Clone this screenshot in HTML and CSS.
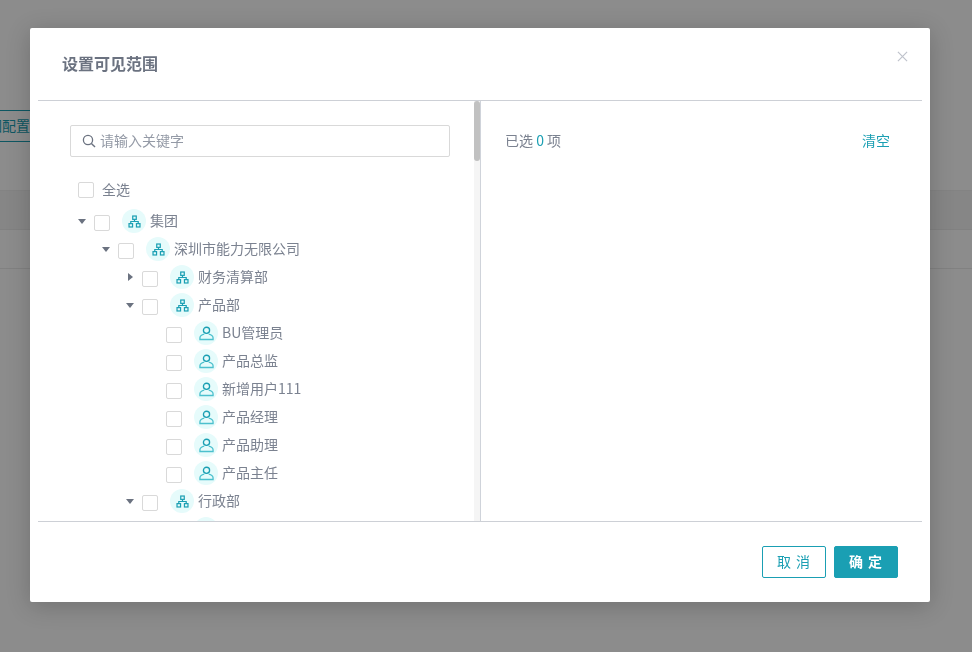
FILE: index.html
```html
<!DOCTYPE html>
<html lang="zh">
<head>
<meta charset="utf-8">
<title>设置可见范围</title>
<link rel="stylesheet" href="styles.css">
</head>
<body>
<svg class="defs" width="0" height="0" aria-hidden="true">
  <symbol id="org" viewBox="0 0 14 14">
    <g fill="none" stroke="#1a9fb3" stroke-width="1.3">
      <rect x="5.1" y="1.1" width="3.8" height="3.6"/>
      <rect x="1.1" y="9.3" width="3.8" height="3.6"/>
      <rect x="9.1" y="9.3" width="3.8" height="3.6"/>
      <path d="M7 4.8V7M3 9.2V7h8v2.2"/>
    </g>
  </symbol>
  <symbol id="user" viewBox="0 0 16 16">
    <g fill="none" stroke-width="1.4">
      <circle cx="8" cy="4.6" r="3.3" stroke="#1a9fb3"/>
      <path d="M5.6 8.6C3 9.2 1 10.4 1 12.6V14.4h14v-1.8c0-2.2-2-3.4-4.6-4" stroke="#4cc0cd"/>
    </g>
  </symbol>
</svg>
<div class="page">
  <div class="page-top"><span class="page-btn">范围配置</span></div>
  <div class="page-head"></div>
  <div class="page-row"></div>
</div>
<div class="mask"></div>
<div class="modal">
  <header class="modal-head">
    <h2 class="modal-title">设置可见范围</h2>
    <svg class="close" viewBox="0 0 12 12" width="11" height="11"><path d="M1 1l10 10M11 1L1 11" stroke="#bfc3cc" stroke-width="1.3" fill="none"/></svg>
  </header>
  <div class="modal-body">
    <section class="left">
      <div class="search">
        <svg class="search-icon" viewBox="0 0 14 14" width="14" height="14"><circle cx="6" cy="6" r="4.6" fill="none" stroke="#6b7280" stroke-width="1.3"/><path d="M9.4 9.4L13 13" stroke="#6b7280" stroke-width="1.4"/></svg>
        <span class="placeholder">请输入关键字</span>
      </div>
      <div class="all"><i class="check"></i><span class="label">全选</span></div>
      <ul class="tree">
        <li class="node l0"><i class="arrow down"></i><i class="check"></i><span class="badge"><svg class="ico-org"><use href="#org"/></svg></span><span class="label">集团</span></li>
        <li class="node l1"><i class="arrow down"></i><i class="check"></i><span class="badge"><svg class="ico-org"><use href="#org"/></svg></span><span class="label">深圳市能力无限公司</span></li>
        <li class="node l2"><i class="arrow side"></i><i class="check"></i><span class="badge"><svg class="ico-org"><use href="#org"/></svg></span><span class="label">财务清算部</span></li>
        <li class="node l2"><i class="arrow down"></i><i class="check"></i><span class="badge"><svg class="ico-org"><use href="#org"/></svg></span><span class="label">产品部</span></li>
        <li class="node l3"><i class="arrow"></i><i class="check"></i><span class="badge"><svg class="ico-user"><use href="#user"/></svg></span><span class="label">BU管理员</span></li>
        <li class="node l3"><i class="arrow"></i><i class="check"></i><span class="badge"><svg class="ico-user"><use href="#user"/></svg></span><span class="label">产品总监</span></li>
        <li class="node l3"><i class="arrow"></i><i class="check"></i><span class="badge"><svg class="ico-user"><use href="#user"/></svg></span><span class="label">新增用户111</span></li>
        <li class="node l3"><i class="arrow"></i><i class="check"></i><span class="badge"><svg class="ico-user"><use href="#user"/></svg></span><span class="label">产品经理</span></li>
        <li class="node l3"><i class="arrow"></i><i class="check"></i><span class="badge"><svg class="ico-user"><use href="#user"/></svg></span><span class="label">产品助理</span></li>
        <li class="node l3"><i class="arrow"></i><i class="check"></i><span class="badge"><svg class="ico-user"><use href="#user"/></svg></span><span class="label">产品主任</span></li>
        <li class="node l2"><i class="arrow down"></i><i class="check"></i><span class="badge"><svg class="ico-org"><use href="#org"/></svg></span><span class="label">行政部</span></li>
        <li class="node l3"><i class="arrow"></i><i class="check"></i><span class="badge"></span></li>
      </ul>
      <div class="scrollbar"><div class="thumb"></div></div>
    </section>
    <section class="pane">
      <div class="count">已选 <b>0</b> 项</div>
      <a class="clear">清空</a>
    </section>
  </div>
  <footer class="modal-foot">
    <button class="btn ghost">取 消</button>
    <button class="btn solid">确 定</button>
  </footer>
</div>
</body>
</html>
```
FILE: styles.css
```css
* { box-sizing: border-box; }
html, body { margin: 0; height: 100%; overflow: hidden; }
body {
  font-family: "Noto Sans CJK SC", "Noto Sans", sans-serif;
  font-size: 14px;
  color: #7b8290;
  background: #fff;
}
.defs { position: absolute; }
.page { height: 652px; padding-top: 110px; }
.page-top { height: 80px; }
.page-btn {
  display: block;
  width: 70px;
  height: 32px;
  margin-left: -38px;
  padding-right: 1px;
  border: 1px solid #1a9fb3;
  color: #1a9fb3;
  line-height: 28px;
  text-align: right;
  white-space: nowrap;
}
.page-head { height: 40px; background: #f5f5f5; border-top: 1px solid #eee; border-bottom: 1px solid #ececec; }
.page-row { height: 39px; border-bottom: 1px solid #ececec; }
.mask { position: fixed; inset: 0; background: rgba(0, 0, 0, .45); }
.modal {
  position: absolute;
  left: 30px;
  top: 28px;
  width: 900px;
  height: 574px;
  padding: 0 8px;
  background: #fff;
  border-radius: 2px;
  box-shadow: 0 4px 24px rgba(0, 0, 0, .2);
  display: flex;
  flex-direction: column;
}
.modal-head {
  flex: none;
  height: 73px;
  border-bottom: 1px solid #cdd0d6;
  padding: 0 0 2px 24px;
  display: flex;
  align-items: center;
  position: relative;
}
.modal-title { margin: 0; font-size: 16px; font-weight: 700; color: #6b7280; }
.close { position: absolute; right: 14px; top: 23px; }
.modal-body { flex: 1; min-height: 0; display: flex; }
.left {
  flex: none;
  width: 443px;
  position: relative;
  overflow: hidden;
  border-right: 1px solid #cfd3da;
  padding: 24px 0 0 32px;
}
.search {
  width: 380px;
  height: 32px;
  border: 1px solid #d9d9d9;
  border-radius: 2px;
  display: flex;
  align-items: center;
  padding: 0 0 0 11px;
  gap: 4px;
}
.placeholder { font-size: 14px; color: #949aa6; padding-bottom: 2px; }
.all {
  display: flex;
  align-items: center;
  gap: 8px;
  height: 28px;
  margin: 19px 0 3px 8px;
}
.label { padding-bottom: 2px; }
.tree { list-style: none; margin: 0; padding: 0; }
.node { display: flex; align-items: center; height: 28px; white-space: nowrap; }
.l0 { padding-left: 6px; }
.l1 { padding-left: 30px; }
.l2 { padding-left: 54px; }
.l3 { padding-left: 78px; }
.arrow { flex: none; width: 18px; height: 10px; position: relative; display: block; }
.arrow.down::before {
  content: "";
  position: absolute;
  left: 2px;
  top: 3px;
  border: 4px solid transparent;
  border-top: 5px solid #6b7280;
  border-bottom: 0;
}
.arrow.side::before {
  content: "";
  position: absolute;
  left: 4px;
  top: 1px;
  border: 4px solid transparent;
  border-left: 5px solid #6b7280;
  border-right: 0;
}
.check {
  flex: none;
  display: block;
  width: 16px;
  height: 16px;
  border: 1px solid #d9d9d9;
  border-radius: 2px;
  background: #fff;
  position: relative;
  top: 2px;
}
.all .check { top: 0; }
.badge {
  flex: none;
  width: 24px;
  height: 24px;
  margin: 0 4px 0 12px;
  border-radius: 50%;
  background: #e6fbfb;
  display: flex;
  align-items: center;
  justify-content: center;
}
.ico-org { width: 13px; height: 13px; }
.ico-user { width: 15px; height: 15px; }
.scrollbar { position: absolute; right: 0; top: 0; bottom: 0; width: 6px; background: #f5f5f5; }
.thumb { height: 60px; background: #c1c1c1; border-radius: 3px; }
.pane {
  flex: 1;
  display: flex;
  justify-content: space-between;
  align-items: flex-start;
  padding: 29px 32px 0 24px;
}
.count { color: #7b8290; }
.count b { font-weight: 400; color: #1a9fb3; }
.clear { color: #1a9fb3; }
.modal-foot {
  flex: none;
  height: 81px;
  border-top: 1px solid #cdd0d6;
  display: flex;
  justify-content: flex-end;
  gap: 8px;
  padding: 24px 24px 0 0;
}
.btn {
  width: 64px;
  height: 32px;
  border-radius: 2px;
  font: 14px "Noto Sans CJK SC", sans-serif;
  letter-spacing: 1px;
  padding: 0 0 2px;
  border: 1px solid #1a9fb3;
}
.ghost { background: #fff; color: #1a9fb3; }
.solid { background: #1a9fb3; color: #fff; font-weight: 700; }
```
